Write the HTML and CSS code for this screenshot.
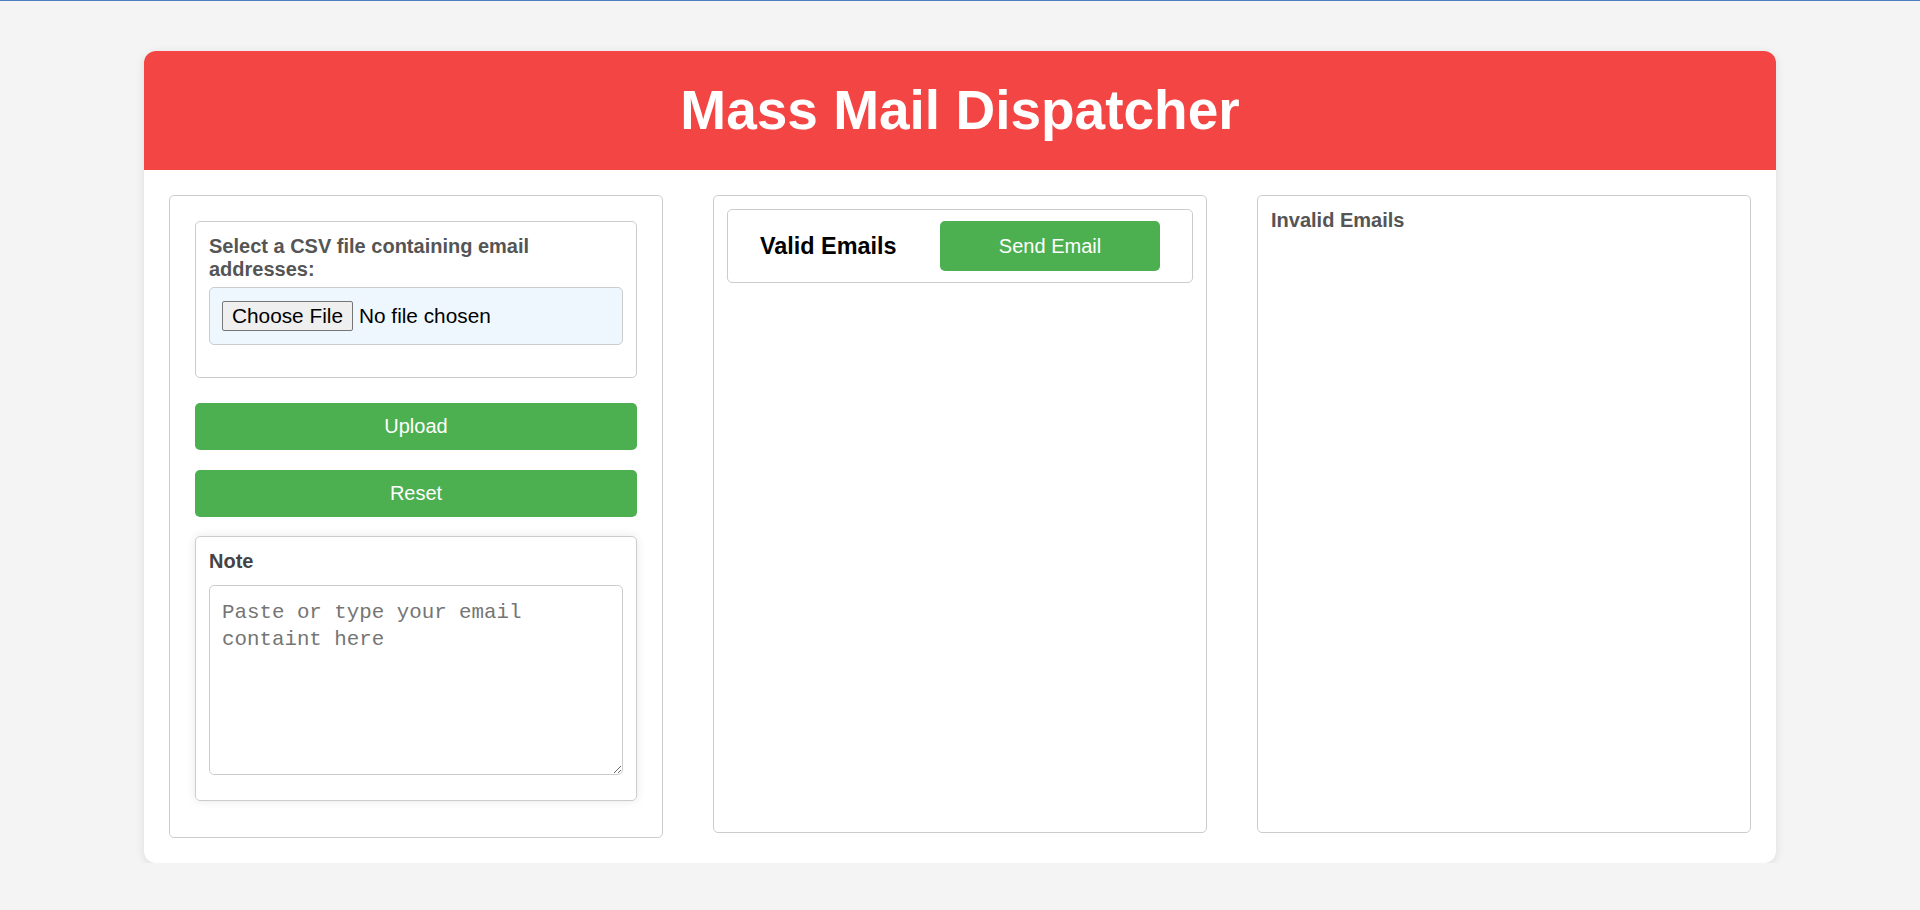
FILE: index.html
```html
<!DOCTYPE html>
<html lang="en">
<head>
<meta charset="utf-8">
<title>Mass Mail Dispatcher</title>
<link rel="stylesheet" href="styles.css">
</head>
<body>
<div class="app">
  <header class="app-header">
    <h1 class="app-title">Mass Mail Dispatcher</h1>
  </header>
  <main class="app-body">
    <section class="panel panel-upload">
      <div class="file-box">
        <label class="field-label" for="csv">Select a CSV file containing email addresses:</label>
        <input type="file" id="csv" class="file-input" accept=".csv">
      </div>
      <button class="btn btn-upload" type="button">Upload</button>
      <button class="btn btn-reset" type="button">Reset</button>
      <div class="note-box">
        <label class="note-label" for="note">Note</label>
        <textarea id="note" class="note-text" placeholder="Paste or type your email containt here"></textarea>
      </div>
    </section>
    <section class="panel panel-list">
      <div class="valid-head">
        <h3 class="valid-title">Valid Emails</h3>
        <button class="btn btn-send" type="button">Send Email</button>
      </div>
    </section>
    <section class="panel panel-list">
      <h4 class="invalid-title">Invalid Emails</h4>
    </section>
  </main>
</div>
</body>
</html>
```

FILE: styles.css
```css
html {
  border-top: 1px solid #4a7fc1;
  background: #f4f4f4;
}

body {
  margin: 0;
  font-family: "Liberation Sans", Arial, sans-serif;
  font-size: 20px;
  color: #000;
  background: #f4f4f4;
}

.app {
  width: 85%;
  margin: 50px auto 0;
  background: #fff;
  border-radius: 12px;
  box-shadow: 0 2px 10px rgba(0, 0, 0, 0.1);
  overflow: hidden;
}

.app-header {
  height: 119px;
  background: #f44545;
  display: flex;
  align-items: center;
  justify-content: center;
}

.app-title {
  margin: 0;
  color: #fff;
  font-size: 55px;
  font-weight: bold;
  line-height: 1;
}

.app-body {
  display: grid;
  grid-template-columns: repeat(3, 1fr);
  column-gap: 50px;
  align-items: start;
  padding: 25px;
}

.panel {
  border: 1px solid #ccc;
  border-radius: 5px;
  box-sizing: border-box;
}

.panel-upload {
  padding: 25px 25px 36px;
}

.panel-list {
  height: 638px;
  padding: 13px;
}

.file-box {
  border: 1px solid #ccc;
  border-radius: 5px;
  padding: 13px 13px 0;
  height: 157px;
  box-sizing: border-box;
}

.field-label {
  display: block;
  font-weight: bold;
  color: #555;
  line-height: 23px;
  margin-bottom: 6px;
}

.file-input {
  display: block;
  width: 100%;
  box-sizing: border-box;
  height: 58px;
  padding: 13px 12px;
  border: 1px solid #ccc;
  border-radius: 5px;
  background: #eff7fe;
  font-family: "Liberation Sans", Arial, sans-serif;
  font-size: 20.8px;
  color: #000;
  line-height: 30px;
}

.file-input::file-selector-button {
  height: 30px;
  padding: 0 9px;
  margin-right: 6px;
  border: 1px solid #767676;
  border-radius: 2px;
  background: #efefef;
  font-family: "Liberation Sans", Arial, sans-serif;
  font-size: 20.8px;
  color: #000;
  vertical-align: top;
}

.btn {
  display: block;
  border: none;
  border-radius: 5px;
  background: #4caf50;
  color: #fff;
  font-family: "Liberation Sans", Arial, sans-serif;
  font-size: 20px;
  cursor: pointer;
}

.btn-upload,
.btn-reset {
  width: 100%;
  height: 47px;
}

.btn-upload {
  margin-top: 25px;
}

.btn-reset {
  margin-top: 20px;
}

.note-box {
  margin-top: 19px;
  border: 1px solid #ccc;
  border-radius: 5px;
  padding: 13px 13px 25px;
  box-shadow: 0 0 10px rgba(0, 0, 0, 0.1);
}

.note-label {
  display: block;
  font-weight: bold;
  color: #444;
  line-height: 23px;
  margin-bottom: 12px;
}

.note-text {
  display: block;
  width: 100%;
  height: 190px;
  box-sizing: border-box;
  padding: 13px 12px 12px;
  border: 1px solid #ccc;
  border-radius: 5px;
  font-family: "Liberation Mono", "DejaVu Sans Mono", monospace;
  font-size: 20.8px;
  line-height: 27px;
  resize: vertical;
}

.note-text::placeholder {
  color: #757575;
}

.valid-head {
  display: flex;
  align-items: center;
  justify-content: space-between;
  height: 74px;
  box-sizing: border-box;
  padding: 0 32px;
  border: 1px solid #ccc;
  border-radius: 5px;
}

.valid-title {
  margin: 0;
  font-size: 23.4px;
  font-weight: bold;
  color: #000;
}

.btn-send {
  width: 220px;
  height: 50px;
}

.invalid-title {
  margin: 0;
  font-size: 20px;
  line-height: 23px;
  font-weight: bold;
  color: #555;
}
```
